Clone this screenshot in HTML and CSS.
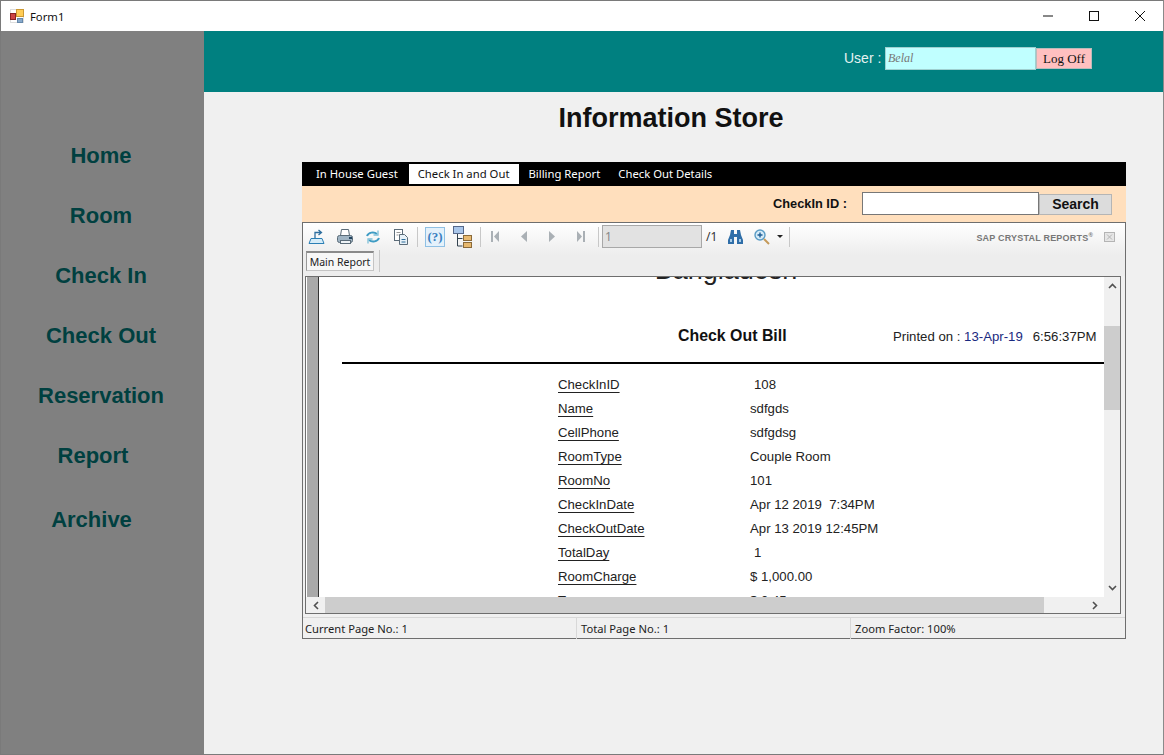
FILE: index.html
```html
<!DOCTYPE html>
<html lang="en">
<head>
    <meta charset="UTF-8">
    <meta name="viewport" content="width=device-width, initial-scale=1.0">
    <title>Form1</title>
    <link rel="stylesheet" href="styles.css">
</head>
<body>
<div class="window">
    <div class="titlebar">
        <svg class="app-icon" width="14" height="14" viewBox="0 0 14 14">
            <rect x="0.5" y="0.5" width="13" height="13" fill="#fff" stroke="#ddd"/>
            <rect x="0.5" y="4.5" width="5" height="6" fill="#c44" stroke="#822"/>
            <rect x="6.5" y="0.5" width="7" height="7" fill="#fc5" stroke="#c93"/>
            <rect x="7.5" y="9.5" width="5" height="4" fill="#8ac" stroke="#68a"/>
        </svg>
        <span class="app-title">Form1</span>
        <div class="win-btns">
            <svg width="46" height="30" viewBox="0 0 46 30"><path d="M18 15h10" stroke="#111" fill="none"/></svg>
            <svg width="46" height="30" viewBox="0 0 46 30"><rect x="18.5" y="10.5" width="9" height="9" stroke="#111" fill="none"/></svg>
            <svg width="46" height="30" viewBox="0 0 46 30"><path d="M18 10l10 10M28 10l-10 10" stroke="#111" fill="none"/></svg>
        </div>
    </div>
    <div class="app">
        <nav class="sidebar">
            <a class="nav-item">Home</a>
            <a class="nav-item">Room</a>
            <a class="nav-item">Check In</a>
            <a class="nav-item">Check Out</a>
            <a class="nav-item">Reservation</a>
            <a class="nav-item nav-report">Report</a>
            <a class="nav-item nav-archive">Archive</a>
        </nav>
        <main class="main">
            <header class="topbar">
                <label class="user-label">User :</label>
                <input class="user-input" type="text" value="Belal">
                <button class="logoff">Log Off</button>
            </header>
            <h1 class="page-title">Information Store</h1>
            <section class="panel">
                <div class="tabs">
                    <a class="tab tab-first">In House Guest</a>
                    <a class="tab tab-active">Check In and Out</a>
                    <a class="tab">Billing Report</a>
                    <a class="tab">Check Out Details</a>
                </div>
                <div class="searchbar">
                    <label class="search-label">CheckIn ID :</label>
                    <input class="search-input" type="text">
                    <button class="search-btn">Search</button>
                </div>
                <div class="viewer">
                    <div class="toolbar">
                        <div class="tool-row">
                            <span class="tool">
                                <svg width="18" height="18" viewBox="0 0 18 18" fill="none" stroke="#2b7fb5">
                                    <path d="M1 15.5h15l-2-5H3z" fill="#d6ecf8"/>
                                    <path d="M7 10V4.5h6M10.5 2l3 2.5-3 2.5" stroke="#2f6f9f" stroke-width="1.3"/>
                                </svg>
                            </span>
                            <span class="tool">
                                <svg width="18" height="18" viewBox="0 0 18 18" stroke="#5a6b78">
                                    <path d="M5.5 1.5h7l1 6h-9z" fill="#fff"/>
                                    <rect x="1.5" y="7.5" width="15" height="7" rx="2" fill="#9fb4c4"/>
                                    <rect x="4.5" y="12.5" width="10" height="3" fill="#eef3f7"/>
                                    <path d="M13 10h3" stroke="#24445e" stroke-width="2"/>
                                </svg>
                            </span>
                            <span class="tool">
                                <svg width="16" height="16" viewBox="0 0 16 16" fill="none" stroke="#3f9cc4" stroke-width="2">
                                    <path d="M2 7a6 5 0 0 1 10-2"/>
                                    <path d="M14 9a6 5 0 0 1-10 2"/>
                                    <path d="M13 1.5V6H8.5M3 14.5V10h4.5" stroke-width="1.3" stroke="#7cbfd8"/>
                                </svg>
                            </span>
                            <span class="tool">
                                <svg width="18" height="18" viewBox="0 0 18 18" stroke="#5b6b78">
                                    <rect x="2.5" y="1.5" width="8" height="11" fill="#fff"/>
                                    <path d="M4.5 4.5h4M4.5 7h2" stroke="#999"/>
                                    <path d="M7.5 6.5h5l3 3v7h-8z" fill="#e7f1f8"/>
                                    <path d="M9.5 11.5h4M9.5 14h4" stroke="#2e6c99"/>
                                </svg>
                            </span>
                            <span class="tool-sep tool-sep-first"></span>
                            <span class="tool"><span class="help-box">(?)</span></span>
                            <span class="tool">
                                <svg width="20" height="22" viewBox="0 0 20 22" stroke="#33424f" fill="none">
                                    <rect x="0.5" y="0.5" width="10" height="7" fill="#a9c6ea" stroke="#55688a"/>
                                    <path d="M4.5 8v12h5M4.5 12.5h5"/>
                                    <rect x="10.5" y="9.5" width="8" height="5" fill="#e8b96f" stroke="#8a6a3a"/>
                                    <rect x="10.5" y="16.5" width="8" height="5" fill="#e8b96f" stroke="#8a6a3a"/>
                                </svg>
                            </span>
                            <span class="tool-sep tool-sep-nav"></span>
                            <span class="tool tool-nav">
                                <svg width="9" height="11" viewBox="0 0 9 11" fill="#aab0b5"><path d="M0 0h2v11H0zM8 0v11L3 5.5z"/></svg>
                            </span>
                            <span class="tool tool-nav">
                                <svg width="7" height="11" viewBox="0 0 7 11" fill="#aab0b5"><path d="M7 0v11L1 5.5z"/></svg>
                            </span>
                            <span class="tool tool-nav">
                                <svg width="7" height="11" viewBox="0 0 7 11" fill="#aab0b5"><path d="M0 0v11l6-5.5z"/></svg>
                            </span>
                            <span class="tool tool-nav">
                                <svg width="9" height="11" viewBox="0 0 9 11" fill="#aab0b5"><path d="M7 0h2v11H7zM1 0v11l5-5.5z"/></svg>
                            </span>
                            <span class="tool-sep tool-sep-page"></span>
                            <input class="page-input" type="text" value="1" disabled>
                            <span class="page-total">/1</span>
                            <span class="tool tool-find">
                                <svg width="15" height="14" viewBox="0 0 15 14" fill="#2f6ea8">
                                    <path d="M3 0h3v4h3V0h3l1 5 2 5v4H9V7H6v7H0v-4l2-5z"/>
                                    <path d="M2 9h2v3H2zM11 9h2v3h-2z" fill="#a8cdea"/>
                                </svg>
                            </span>
                            <span class="tool tool-zoom">
                                <svg width="16" height="16" viewBox="0 0 16 16" fill="none">
                                    <circle cx="6" cy="6" r="5" fill="#d5ebf8" stroke="#5a9cc5" stroke-width="1.4"/>
                                    <path d="M3.5 6h5M6 3.5v5" stroke="#1f5f96" stroke-width="1.4"/>
                                    <path d="M10 10l5 5" stroke="#c49a5a" stroke-width="2"/>
                                </svg>
                            </span>
                            <span class="caret"></span>
                            <span class="tool-sep tool-sep-end"></span>
                            <span class="brand">SAP CRYSTAL REPORTS<sup class="brand-mark">®</sup></span>
                            <svg class="viewer-close" width="11" height="10" viewBox="0 0 11 10" fill="none" stroke="#b4b4b4">
                                <rect x="0.5" y="0.5" width="10" height="9" fill="#e6e6e6"/>
                                <path d="M3 2.5l5 5M8 2.5l-5 5"/>
                            </svg>
                        </div>
                        <div class="report-tabs">
                            <span class="report-tab">Main Report</span>
                        </div>
                    </div>
                    <div class="report-frame">
                        <div class="report-top">
                            <div class="group-strip"></div>
                            <div class="report-page">
                                <div class="company">Bangladesh</div>
                                <div class="bill-head">
                                    <span class="bill-title">Check Out Bill</span>
                                    <span class="printed">Printed on : <span class="printed-date">13-Apr-19</span><span class="printed-time">6:56:37PM</span></span>
                                </div>
                                <div class="bill-rule"></div>
                                <dl class="bill-rows">
                                    <div class="bill-row"><dt>CheckInID</dt><dd class="num">108</dd></div>
                                    <div class="bill-row"><dt>Name</dt><dd>sdfgds</dd></div>
                                    <div class="bill-row"><dt>CellPhone</dt><dd>sdfgdsg</dd></div>
                                    <div class="bill-row"><dt>RoomType</dt><dd>Couple Room</dd></div>
                                    <div class="bill-row"><dt>RoomNo</dt><dd>101</dd></div>
                                    <div class="bill-row"><dt>CheckInDate</dt><dd>Apr 12 2019&nbsp; 7:34PM</dd></div>
                                    <div class="bill-row"><dt>CheckOutDate</dt><dd>Apr 13 2019 12:45PM</dd></div>
                                    <div class="bill-row"><dt>TotalDay</dt><dd class="num">1</dd></div>
                                    <div class="bill-row"><dt>RoomCharge</dt><dd>$&nbsp;1,000.00</dd></div>
                                    <div class="bill-row"><dt>Tax</dt><dd>$&nbsp;0.45</dd></div>
                                </dl>
                            </div>
                            <div class="vscroll">
                                <svg class="arrow-up" width="9" height="6" viewBox="0 0 9 6" fill="none" stroke="#505050" stroke-width="1.6"><path d="M1 5l3.5-3.5L8 5"/></svg>
                                <div class="vthumb"></div>
                                <svg class="arrow-down" width="9" height="6" viewBox="0 0 9 6" fill="none" stroke="#505050" stroke-width="1.6"><path d="M1 1l3.5 3.5L8 1"/></svg>
                            </div>
                        </div>
                        <div class="hscroll-row">
                            <div class="hscroll">
                                <svg class="arrow-left" width="6" height="9" viewBox="0 0 6 9" fill="none" stroke="#505050" stroke-width="1.6"><path d="M5 1L1.5 4.5 5 8"/></svg>
                                <div class="hthumb"></div>
                                <svg class="arrow-right" width="6" height="9" viewBox="0 0 6 9" fill="none" stroke="#505050" stroke-width="1.6"><path d="M1 1l3.5 3.5L1 8"/></svg>
                            </div>
                        </div>
                    </div>
                    <div class="statusbar">
                        <span class="status-cell">Current Page No.: 1</span>
                        <span class="status-cell status-mid">Total Page No.: 1</span>
                        <span class="status-cell status-last">Zoom Factor: 100%</span>
                    </div>
                </div>
            </section>
        </main>
    </div>
</div>
</body>
</html>
```

FILE: styles.css
```css
html, body {
    margin: 0;
    height: 100%;
}
body {
    font-family: "Liberation Sans", Arial, sans-serif;
    background-color: #f0f0f0;
    overflow: hidden;
}
.window {
    height: 755px;
    box-sizing: border-box;
    border: 1px solid #7a7a7a;
    border-right-color: #8a8a8a;
    display: flex;
    flex-direction: column;
}
.titlebar {
    height: 30px;
    background: #fff;
    display: flex;
    align-items: center;
    flex-shrink: 0;
}
.app-icon {
    margin-left: 9px;
}
.app-title {
    margin-left: 6px;
    font-family: "Noto Sans", sans-serif;
    font-size: 11.3px;
    color: #111;
}
.win-btns {
    margin-left: auto;
    display: flex;
}
.win-btns svg {
    display: block;
}
.app {
    flex: 1;
    display: flex;
    min-height: 0;
}
.sidebar {
    width: 203px;
    background: #808080;
    padding-top: 95px;
    box-sizing: border-box;
    flex-shrink: 0;
}
.nav-item {
    display: block;
    height: 60px;
    line-height: 60px;
    padding-right: 3px;
    text-align: center;
    font-size: 22px;
    font-weight: bold;
    color: #004040;
}
.nav-report {
    padding-right: 19px;
}
.nav-archive {
    margin-top: 4px;
    padding-right: 22px;
}
.main {
    flex: 1;
    min-width: 0;
}
.topbar {
    height: 61px;
    box-sizing: border-box;
    background: #008080;
    display: flex;
    align-items: center;
    padding: 0 0 7px 640px;
}
.user-label {
    font-size: 14px;
    color: #e6f2f2;
    margin-right: 5px;
    width: 36px;
    white-space: nowrap;
}
.user-input {
    width: 151px;
    height: 23px;
    box-sizing: border-box;
    border: 1px solid #9fd0d0;
    background: #c0ffff;
    font-family: "Liberation Serif", serif;
    font-size: 12px;
    font-style: italic;
    color: #777;
    padding: 0 2px;
    margin: 0;
}
.logoff {
    width: 56px;
    height: 21px;
    margin: 1px 0 0 0;
    padding: 0;
    box-sizing: border-box;
    border: 1px solid #bbb;
    background: #ffc0c0;
    font-family: "Liberation Serif", serif;
    font-size: 13px;
    color: #111;
}
.page-title {
    margin: 0;
    height: 70px;
    line-height: 52px;
    text-align: center;
    font-size: 27px;
    font-weight: bold;
    color: #111;
    padding-right: 25px;
    box-sizing: border-box;
}
.panel {
    margin-left: 98px;
    width: 824px;
}
.tabs {
    height: 24px;
    background: #000;
    display: flex;
    align-items: center;
    padding-left: 5px;
    font-family: "Noto Sans", sans-serif;
    font-size: 11.3px;
    color: #fff;
}
.tab {
    padding: 0 9px;
    height: 20px;
    line-height: 20px;
}
.tab-first {
    margin-right: 2px;
}
.tab-active {
    background: #fff;
    color: #111;
    padding-right: 10px;
}
.searchbar {
    height: 36px;
    background: #ffdfbd;
    display: flex;
    align-items: center;
    padding: 0 0 2px 471px;
    box-sizing: border-box;
}
.search-label {
    font-size: 12.8px;
    font-weight: bold;
    color: #111;
    width: 89px;
}
.search-input {
    width: 177px;
    height: 23px;
    box-sizing: border-box;
    border: 1px solid #777;
    background: #fff;
    margin: 0;
}
.search-btn {
    width: 73px;
    height: 21px;
    box-sizing: border-box;
    border: 1px solid #b5b5b5;
    background: #dcdcdc;
    font-family: "Liberation Sans", Arial, sans-serif;
    font-size: 14px;
    font-weight: bold;
    color: #111;
    padding: 0;
    margin: 2px 0 0 0;
}
.viewer {
    height: 417px;
    box-sizing: border-box;
    border: 1px solid #6e6e6e;
    background: #f0f0f0;
    display: flex;
    flex-direction: column;
}
.toolbar {
    height: 53px;
    flex-shrink: 0;
    background: linear-gradient(#fff, #ededed 60%);
}
.tool-row {
    height: 27px;
    display: flex;
    align-items: center;
}
.tool {
    width: 28px;
    display: flex;
    justify-content: center;
    align-items: center;
    flex-shrink: 0;
}
.tool-sep {
    width: 1px;
    height: 20px;
    background: #c8c8c8;
    flex-shrink: 0;
}
.tool-sep-first {
    margin: 0 3px 0 2px;
}
.tool-sep-nav {
    margin-left: 3px;
}
.help-box {
    width: 18px;
    height: 18px;
    border: 1px solid #8fc0e4;
    background: #e4f1fb;
    color: #3a7fc0;
    font-family: "Liberation Serif", serif;
    font-size: 13px;
    font-weight: bold;
    line-height: 18px;
    text-align: center;
}
.tool-nav {
    width: 28.5px;
}
.tool-sep-page {
    margin: 0 3px;
}
.page-input {
    width: 100px;
    height: 23px;
    box-sizing: border-box;
    border: 1px solid #a8a8a8;
    background: #e2e2e2;
    font-family: "Noto Sans", sans-serif;
    font-size: 12px;
    color: #888;
    padding: 0 2px;
    margin: 0;
    flex-shrink: 0;
}
.page-total {
    margin-left: 4px;
    width: 14px;
    font-family: "Noto Sans", sans-serif;
    font-size: 12px;
    color: #333;
}
.tool-find {
    width: 26px;
    margin-left: 2px;
}
.tool-zoom {
    width: 24px;
    margin-left: 2px;
}
.caret {
    margin-left: 3px;
    width: 0;
    height: 0;
    border: 3px solid transparent;
    border-top: 3px solid #222;
    border-bottom: 0;
}
.tool-sep-end {
    margin-left: 6px;
}
.brand {
    margin: 2px 0 0 auto;
    font-size: 9px;
    font-weight: bold;
    color: #777;
    letter-spacing: 0.2px;
    white-space: nowrap;
}
.brand-mark {
    font-size: 6px;
    line-height: 0;
}
.viewer-close {
    margin: 0 10px 0 11px;
    flex-shrink: 0;
}
.report-tabs {
    height: 26px;
    padding-left: 3px;
    display: flex;
}
.report-tab {
    height: 20px;
    line-height: 19px;
    width: 68px;
    box-sizing: border-box;
    text-align: center;
    border: 1px solid #c4c4c4;
    border-top: 2px solid #8a8a8a;
    border-left-color: #999;
    background: #f7f7f7;
    font-family: "Noto Sans", sans-serif;
    font-size: 10.5px;
    color: #222;
    margin-top: 1px;
}
.report-tabs::after {
    content: "";
    width: 1px;
    height: 22px;
    background: #c8c8c8;
    margin-left: 5px;
}
.report-frame {
    height: 338px;
    margin: 0 4px 0 2px;
    box-sizing: border-box;
    border: 1px solid #6e6e6e;
    background: #fff;
    display: flex;
    flex-direction: column;
    flex-shrink: 0;
}
.report-top {
    flex: 1;
    min-height: 0;
    display: flex;
}
.group-strip {
    width: 11px;
    margin-left: 1px;
    background: #a9a9a9;
    border-right: 1px solid #333;
    flex-shrink: 0;
}
.report-page {
    flex: 1;
    min-width: 0;
    overflow: hidden;
    color: #222;
}
.company {
    margin-top: -20px;
    height: 26px;
    line-height: 26px;
    text-align: center;
    padding-left: 29px;
    font-size: 27px;
    color: #222;
}
.bill-head {
    margin-top: 41px;
    height: 24px;
    padding-left: 359px;
    display: flex;
    align-items: center;
}
.bill-title {
    font-size: 15.9px;
    font-weight: bold;
    color: #111;
    width: 215px;
    flex-shrink: 0;
}
.printed {
    font-size: 13.2px;
    white-space: nowrap;
}
.printed-date {
    color: #1a2a80;
}
.printed-time {
    margin-left: 10px;
}
.bill-rule {
    height: 2px;
    background: #000;
    margin: 14px 0 9px 23px;
}
.bill-rows {
    margin: 0 0 0 239px;
    font-size: 13.2px;
}
.bill-row {
    height: 24px;
    line-height: 24px;
    display: flex;
}
.bill-row dt {
    width: 192px;
    text-decoration: underline;
    text-underline-offset: 3px;
}
.bill-row dd {
    margin: 0;
}
.bill-row dd.num {
    padding-left: 4px;
}
.vscroll {
    width: 16px;
    background: #f0f0f0;
    flex-shrink: 0;
    display: flex;
    flex-direction: column;
    align-items: center;
}
.arrow-up {
    margin-top: 6px;
}
.vthumb {
    width: 100%;
    height: 84px;
    background: #cdcdcd;
    margin-top: 37px;
}
.arrow-down {
    margin-top: auto;
    margin-bottom: 6px;
}
.hscroll-row {
    height: 16px;
    background: #f0f0f0;
    flex-shrink: 0;
}
.hscroll {
    width: 798px;
    height: 16px;
    display: flex;
    align-items: center;
}
.arrow-left {
    margin-left: 7px;
}
.hthumb {
    width: 719px;
    height: 16px;
    background: #cdcdcd;
    margin-left: 6px;
}
.arrow-right {
    margin-left: 48px;
}
.statusbar {
    flex: 1;
    display: flex;
    margin-top: 3px;
    border-top: 1px solid #d8d8d8;
    font-family: "Noto Sans", sans-serif;
    font-size: 11.2px;
    color: #222;
}
.status-cell {
    width: 274px;
    box-sizing: border-box;
    border-right: 1px solid #d8d8d8;
    padding-left: 2px;
    line-height: 21px;
}
.status-mid {
    padding-left: 4px;
}
.status-last {
    border-right: 0;
    padding-left: 4px;
}
```
